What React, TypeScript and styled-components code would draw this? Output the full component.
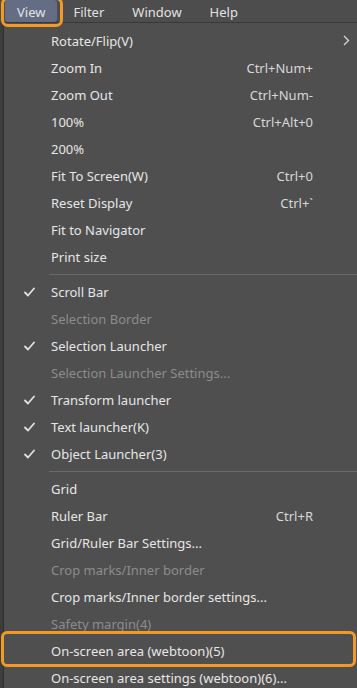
import React from "react";
import styled, { createGlobalStyle, css } from "styled-components";

const GlobalStyle = createGlobalStyle`
  html, body {
    margin: 0;
    padding: 0;
    background: #4f4f4f;
  }
  body {
    font-family: "Noto Sans", "Open Sans", sans-serif;
    font-size: 13px;
    color: #e4e4e4;
  }
`;

type Item =
  | { kind: "sep" }
  | {
      kind: "item";
      label: string;
      shortcut?: string;
      checked?: boolean;
      disabled?: boolean;
      submenu?: boolean;
      marked?: boolean;
    };

const items: Item[] = [
  { kind: "item", label: "Rotate/Flip(V)", submenu: true },
  { kind: "item", label: "Zoom In", shortcut: "Ctrl+Num+" },
  { kind: "item", label: "Zoom Out", shortcut: "Ctrl+Num-" },
  { kind: "item", label: "100%", shortcut: "Ctrl+Alt+0" },
  { kind: "item", label: "200%" },
  { kind: "item", label: "Fit To Screen(W)", shortcut: "Ctrl+0" },
  { kind: "item", label: "Reset Display", shortcut: "Ctrl+`" },
  { kind: "item", label: "Fit to Navigator" },
  { kind: "item", label: "Print size" },
  { kind: "sep" },
  { kind: "item", label: "Scroll Bar", checked: true },
  { kind: "item", label: "Selection Border", disabled: true },
  { kind: "item", label: "Selection Launcher", checked: true },
  { kind: "item", label: "Selection Launcher Settings...", disabled: true },
  { kind: "item", label: "Transform launcher", checked: true },
  { kind: "item", label: "Text launcher(K)", checked: true },
  { kind: "item", label: "Object Launcher(3)", checked: true },
  { kind: "sep" },
  { kind: "item", label: "Grid" },
  { kind: "item", label: "Ruler Bar", shortcut: "Ctrl+R" },
  { kind: "item", label: "Grid/Ruler Bar Settings..." },
  { kind: "item", label: "Crop marks/Inner border", disabled: true },
  { kind: "item", label: "Crop marks/Inner border settings..." },
  { kind: "item", label: "Safety margin(4)", disabled: true },
  { kind: "item", label: "On-screen area (webtoon)(5)", marked: true },
  { kind: "item", label: "On-screen area settings (webtoon)(6)..." },
];

const Page = styled.div`
  display: flex;
  flex-direction: column;
  width: 357px;
  height: 688px;
  overflow: hidden;
  background: #4f4f4f;
`;

const MenuBar = styled.div`
  display: flex;
  align-items: center;
  gap: 4px;
  height: 24px;
  padding-left: 5px;
  border-bottom: 1px solid #393939;
  background: #4d4d4d;
`;

const BarItem = styled.div<{ $active?: boolean }>`
  position: relative;
  display: flex;
  align-items: center;
  height: 22px;
  padding: 1px 12px 0;
  box-sizing: border-box;
  font-size: 13px;
  color: #e2e2e2;
  ${(p) =>
    p.$active &&
    css`
      background: #646d84;
      border-radius: 3px;
      &::after {
        content: "";
        position: absolute;
        left: -4px;
        right: -6px;
        top: -3px;
        bottom: -5px;
        border: 3px solid #f09a2a;
        border-radius: 7px;
      }
    `}
`;

const Body = styled.div`
  flex: 1;
  display: flex;
`;

const LeftStrip = styled.div`
  width: 3px;
  border-right: 1px solid #2f2f2f;
  background: #3d3d3d;
`;

const Menu = styled.div`
  flex: 1;
  display: flex;
  flex-direction: column;
  padding-top: 4px;
  background: #4f4f4f;
`;

const Row = styled.div<{ $disabled?: boolean; $marked?: boolean }>`
  position: relative;
  display: grid;
  grid-template-columns: 47px 1fr auto 44px;
  align-items: center;
  height: 27px;
  color: ${(p) => (p.$disabled ? "#8c8c8c" : "#e6e6e6")};
  ${(p) =>
    p.$marked &&
    css`
      &::after {
        content: "";
        position: absolute;
        left: -3px;
        right: 1px;
        top: -6px;
        bottom: -3px;
        border: 3px solid #f09a2a;
        border-radius: 6px;
      }
    `}
`;

const CheckCell = styled.div`
  display: flex;
  justify-content: center;
  padding-left: 4px;
`;

const Label = styled.span`
  white-space: nowrap;
`;

const Shortcut = styled.span`
  white-space: nowrap;
  color: #d8d8d8;
`;

const ArrowCell = styled.div`
  display: flex;
  justify-content: flex-end;
  padding-right: 7px;
`;

const Separator = styled.div`
  display: flex;
  align-items: center;
  height: 8px;
  padding-left: 45px;
  &::before {
    content: "";
    flex: 1;
    height: 1px;
    background: #6a6a6a;
  }
`;

const Check = () => (
  <svg width="11" height="10" viewBox="0 0 11 10">
    <path
      d="M1 5.5 L4 8.5 L10 1.5"
      fill="none"
      stroke="#e0e0e0"
      strokeWidth="1.8"
      strokeLinecap="round"
      strokeLinejoin="round"
    />
  </svg>
);

const Chevron = () => (
  <svg width="7" height="11" viewBox="0 0 7 11">
    <path d="M1 1 L5.5 5.5 L1 10" fill="none" stroke="#d8d8d8" strokeWidth="1.3" />
  </svg>
);

export default function App() {
  return (
    <>
      <GlobalStyle />
      <Page>
        <MenuBar>
          <BarItem $active>View</BarItem>
          <BarItem>Filter</BarItem>
          <BarItem>Window</BarItem>
          <BarItem>Help</BarItem>
        </MenuBar>
        <Body>
          <LeftStrip />
          <Menu>
            {items.map((it, i) =>
              it.kind === "sep" ? (
                <Separator key={i} />
              ) : (
                <Row key={i} $disabled={it.disabled} $marked={it.marked}>
                  <CheckCell>{it.checked && <Check />}</CheckCell>
                  <Label>{it.label}</Label>
                  <Shortcut>{it.shortcut}</Shortcut>
                  <ArrowCell>{it.submenu && <Chevron />}</ArrowCell>
                </Row>
              )
            )}
          </Menu>
        </Body>
      </Page>
    </>
  );
}
